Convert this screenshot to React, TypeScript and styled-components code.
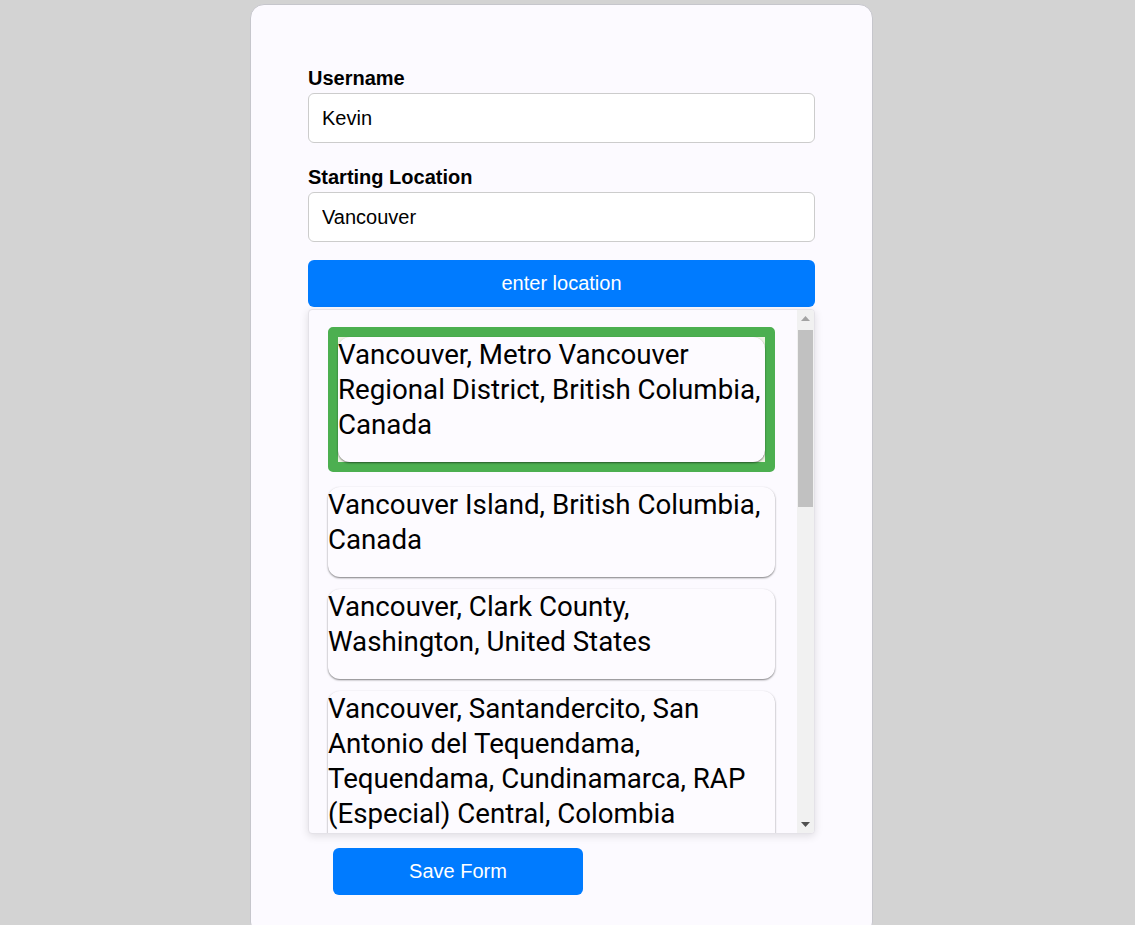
import React, { useEffect, useRef, useState } from "react";
import styled, { createGlobalStyle } from "styled-components";

const GlobalStyle = createGlobalStyle`
  html, body {
    margin: 0;
    padding: 0;
    background: #d3d3d3;
  }
  body {
    font-family: "Liberation Sans", Arial, sans-serif;
  }
  * { box-sizing: border-box; }
`;

const Page = styled.div`
  display: flex;
  padding-top: 4px;
  padding-left: 250px;
`;

const Card = styled.div`
  width: 623px;
  background: #fcfaff;
  border: 1px solid #c6c6cc;
  border-radius: 14px;
  padding: 62px 57px 40px 57px;
  display: flex;
  flex-direction: column;
`;

const Field = styled.div<{ $mb: number }>`
  display: flex;
  flex-direction: column;
  margin-bottom: ${(p) => p.$mb}px;
`;

const Label = styled.label`
  font-family: "Liberation Sans", Arial, sans-serif;
  font-weight: 700;
  font-size: 20px;
  line-height: 23px;
  color: #000;
  margin-bottom: 3px;
`;

const Input = styled.input`
  height: 50px;
  width: 100%;
  border: 1px solid #cccccc;
  border-radius: 6px;
  background: #ffffff;
  padding: 0 13px;
  font-family: "Liberation Sans", Arial, sans-serif;
  font-size: 20px;
  color: #000;
  outline: none;
`;

const PrimaryButton = styled.button<{ $width?: string; $ml?: number }>`
  height: 47px;
  width: ${(p) => p.$width || "100%"};
  margin-left: ${(p) => p.$ml || 0}px;
  background: #007bff;
  color: #ffffff;
  border: none;
  border-radius: 6px;
  font-family: "Liberation Sans", Arial, sans-serif;
  font-size: 20px;
  cursor: pointer;
`;

const ListBox = styled.div`
  position: relative;
  margin-top: 2px;
  height: 525px;
  background: #fcfaff;
  border: 1px solid #e4e2e8;
  border-radius: 4px;
  box-shadow: 0 2px 8px rgba(0, 0, 0, 0.12);
  overflow: hidden;
`;

const Scroller = styled.div`
  height: 100%;
  overflow-y: scroll;
  scrollbar-width: none;
  padding: 17px 39px 17px 19px;
  display: flex;
  flex-direction: column;
  gap: 12px;
  &::-webkit-scrollbar {
    display: none;
  }
`;

const ScrollTrack = styled.div`
  position: absolute;
  top: 0;
  right: 0;
  bottom: 0;
  width: 17px;
  background: #f1f1f1;
  display: flex;
  flex-direction: column;
`;

const ArrowButton = styled.div`
  height: 17px;
  flex-shrink: 0;
  display: flex;
  align-items: center;
  justify-content: center;
`;

const ThumbLane = styled.div`
  position: relative;
  flex: 1;
`;

const Thumb = styled.div`
  position: absolute;
  left: 1px;
  right: 1px;
  background: #c1c1c1;
`;

const ItemFrame = styled.div<{ $selected: boolean }>`
  flex-shrink: 0;
  border: ${(p) => (p.$selected ? "10px solid #4caf50" : "none")};
  border-radius: ${(p) => (p.$selected ? "5px" : "12px")};
  background: ${(p) => (p.$selected ? "#eef4e4" : "transparent")};
  margin-bottom: ${(p) => (p.$selected ? "3px" : "0")};
  cursor: pointer;
`;

const ItemCard = styled.div`
  background: #fdfbff;
  border-radius: 12px;
  box-shadow: 0 1px 2px rgba(0, 0, 0, 0.5);
  padding: 0 0 20px 0;
  font-family: Roboto, "Noto Sans", sans-serif;
  font-size: 27.7px;
  line-height: 35px;
  color: #000;
`;

const SaveRow = styled.div`
  display: flex;
  margin-top: 14px;
`;

const results = [
  "Vancouver, Metro Vancouver Regional District, British Columbia, Canada",
  "Vancouver Island, British Columbia, Canada",
  "Vancouver, Clark County, Washington, United States",
  "Vancouver, Santandercito, San Antonio del Tequendama, Tequendama, Cundinamarca, RAP (Especial) Central, Colombia",
  "North Vancouver, Metro Vancouver Regional District, British Columbia, Canada",
  "West Vancouver, Metro Vancouver Regional District, British Columbia, Canada",
  "Vancouver Lake, Clark County, Washington, United States",
  "Vancouver International Airport, Richmond, British Columbia, Canada",
  "Vancouver Street, Albany, Western Australia, Australia",
  "Vancouver, Wayne County, Kentucky, United States",
  "Vancouver Peak, Yukon, Canada",
  "Vancouver Harbour, Metro Vancouver Regional District, British Columbia, Canada",
];

function Arrow({ up, color }: { up: boolean; color: string }) {
  return (
    <svg width="9" height="5" viewBox="0 0 9 5">
      <path d={up ? "M0 5 L4.5 0 L9 5 Z" : "M0 0 L4.5 5 L9 0 Z"} fill={color} />
    </svg>
  );
}

export default function App() {
  const [selected, setSelected] = useState(0);
  const scrollRef = useRef<HTMLDivElement>(null);
  const [thumb, setThumb] = useState({ top: 3, height: 173 });

  const update = () => {
    const el = scrollRef.current;
    if (!el) return;
    const lane = el.clientHeight - 34;
    const h = Math.max(20, (el.clientHeight / el.scrollHeight) * lane);
    const max = el.scrollHeight - el.clientHeight;
    const t = max > 0 ? (el.scrollTop / max) * (lane - h - 3) + 3 : 3;
    setThumb({ top: t, height: h });
  };

  useEffect(() => {
    update();
  }, []);

  return (
    <>
      <GlobalStyle />
      <Page>
        <Card>
          <Field $mb={23}>
            <Label>Username</Label>
            <Input defaultValue="Kevin" />
          </Field>
          <Field $mb={18}>
            <Label>Starting Location</Label>
            <Input defaultValue="Vancouver" />
          </Field>
          <PrimaryButton>enter location</PrimaryButton>
          <ListBox>
            <Scroller ref={scrollRef} onScroll={update}>
              {results.map((r, i) => (
                <ItemFrame key={i} $selected={i === selected} onClick={() => setSelected(i)}>
                  <ItemCard>{r}</ItemCard>
                </ItemFrame>
              ))}
            </Scroller>
            <ScrollTrack>
              <ArrowButton>
                <Arrow up color="#a3a3a3" />
              </ArrowButton>
              <ThumbLane>
                <Thumb style={{ top: thumb.top, height: thumb.height }} />
              </ThumbLane>
              <ArrowButton>
                <Arrow up={false} color="#505050" />
              </ArrowButton>
            </ScrollTrack>
          </ListBox>
          <SaveRow>
            <PrimaryButton $width="250px" $ml={25}>
              Save Form
            </PrimaryButton>
          </SaveRow>
        </Card>
      </Page>
    </>
  );
}
